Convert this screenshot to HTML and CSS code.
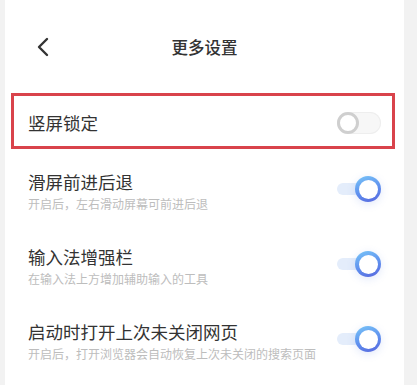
FILE: index.html
```html
<!DOCTYPE html>
<html lang="zh">
<head>
<meta charset="utf-8">
<title>更多设置</title>
<link rel="stylesheet" href="styles.css">
</head>
<body>
<div class="panel">
  <header class="header">
    <div class="back">
      <svg width="14" height="20" viewBox="0 0 14 20"><polyline points="11,2 3,10 11,18" fill="none" stroke="#333" stroke-width="2.4" stroke-linecap="round" stroke-linejoin="round"/></svg>
    </div>
    <div class="title">更多设置</div>
    <div></div>
  </header>
  <div class="row row-lock">
    <div class="label">竖屏锁定</div>
    <div class="toggle off"><span class="knob"></span></div>
  </div>
  <div class="row">
    <div class="texts">
      <div class="label">滑屏前进后退</div>
      <div class="desc">开启后，左右滑动屏幕可前进后退</div>
    </div>
    <div class="toggle on"><span class="track"></span><span class="knob"></span></div>
  </div>
  <div class="row">
    <div class="texts">
      <div class="label">输入法增强栏</div>
      <div class="desc">在输入法上方增加辅助输入的工具</div>
    </div>
    <div class="toggle on"><span class="track"></span><span class="knob"></span></div>
  </div>
  <div class="row">
    <div class="texts">
      <div class="label">启动时打开上次未关闭网页</div>
      <div class="desc">开启后，打开浏览器会自动恢复上次未关闭的搜索页面</div>
    </div>
    <div class="toggle on"><span class="track"></span><span class="knob"></span></div>
  </div>
</div>
</body>
</html>
```

FILE: styles.css
```css
html, body {
  margin: 0;
  padding: 0;
  background: #f2f2f2;
  font-family: "Noto Sans CJK SC", "Noto Sans", sans-serif;
}
.panel {
  margin-left: 5px;
  width: 399px;
  height: 385px;
  background: #fff;
  overflow: hidden;
}
.header {
  display: grid;
  grid-template-columns: 1fr auto 1fr;
  align-items: center;
  padding: 35px 0 34px 31px;
  height: 24px;
}
.back {
  display: flex;
  align-items: center;
  height: 24px;
}
.title {
  font-size: 16.5px;
  font-weight: 500;
  color: #333;
  line-height: 24px;
  margin-left: -31px;
}
.row {
  display: flex;
  align-items: flex-start;
  justify-content: space-between;
  padding: 21px 23px 0 23px;
  height: 54px;
}
.row-lock {
  margin: 0 9px 0 6px;
  border: 3px solid #d9434b;
  box-sizing: border-box;
  height: 56px;
  padding: 3px 11px 0 14px;
  align-items: center;
}
.label {
  font-size: 17.5px;
  color: #333;
  line-height: 24px;
}
.desc {
  font-size: 12px;
  color: #bdbdbd;
  line-height: 18px;
  margin-top: 1px;
}
.texts {
  display: flex;
  flex-direction: column;
}
.toggle {
  position: relative;
  width: 44px;
  flex: none;
}
.toggle.off {
  height: 22px;
  border-radius: 11px;
  background: #f7f7f7;
  box-shadow: inset 0 0 0 1px #eeeeee;
}
.toggle.off .knob {
  position: absolute;
  left: 0;
  top: 0;
  width: 22px;
  height: 22px;
  border-radius: 50%;
  box-sizing: border-box;
  border: 3px solid #cfcfcf;
  background: #fff;
}
.toggle.on {
  height: 26px;
  margin-top: 6px;
}
.toggle.on .track {
  position: absolute;
  left: 0;
  top: 7px;
  width: 34px;
  height: 12px;
  border-radius: 6px;
  background: #e4edfb;
}
.toggle.on .knob {
  position: absolute;
  right: 0;
  top: 0;
  width: 26px;
  height: 26px;
  border-radius: 50%;
  background: linear-gradient(160deg, #78c6f8 0%, #5f8fee 55%, #5765dd 100%);
  box-shadow: 0 2px 8px rgba(90, 130, 230, 0.18);
}
.toggle.on .knob::after {
  content: "";
  position: absolute;
  inset: 3.5px;
  border-radius: 50%;
  background: #fff;
}
```
